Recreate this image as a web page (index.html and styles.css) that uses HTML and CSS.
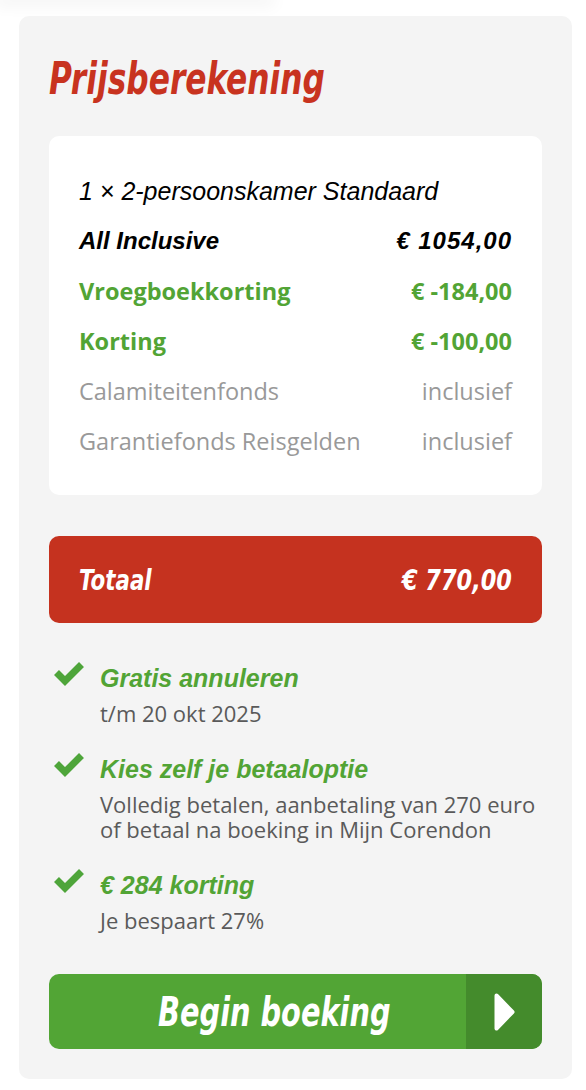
FILE: index.html
```html
<!DOCTYPE html>
<html lang="nl">
<head>
  <meta charset="UTF-8">
  <title>Prijsberekening</title>
  <link rel="stylesheet" href="styles.css">
</head>
<body>
  <div class="shade"></div>

  <div class="panel">
    <h2 class="title"><span class="narrow">Prijsberekening</span></h2>

    <div class="card">
      <div class="row room"><span>1 × 2-persoonskamer Standaard</span></div>
      <div class="row board"><span>All Inclusive</span><span class="amount">€ 1054,00</span></div>
      <div class="row discount"><span>Vroegboekkorting</span><span>€ -184,00</span></div>
      <div class="row discount"><span>Korting</span><span>€ -100,00</span></div>
      <div class="row extra"><span>Calamiteitenfonds</span><span>inclusief</span></div>
      <div class="row extra"><span>Garantiefonds Reisgelden</span><span>inclusief</span></div>
    </div>

    <div class="total">
      <span class="narrow total-label">Totaal</span>
      <span class="narrow total-price">€ 770,00</span>
    </div>

    <ul class="usps">
      <li>
        <svg class="check" width="32" height="25" viewBox="0 0 32 25"><polyline points="3.5,10.5 12,19 28.5,2.5" /></svg>
        <div>
          <div class="usp-title">Gratis annuleren</div>
          <div class="usp-text">t/m 20 okt 2025</div>
        </div>
      </li>
      <li>
        <svg class="check" width="32" height="25" viewBox="0 0 32 25"><polyline points="3.5,10.5 12,19 28.5,2.5" /></svg>
        <div>
          <div class="usp-title">Kies zelf je betaaloptie</div>
          <div class="usp-text">Volledig betalen, aanbetaling van 270 euro of betaal na boeking in Mijn Corendon</div>
        </div>
      </li>
      <li>
        <svg class="check" width="32" height="25" viewBox="0 0 32 25"><polyline points="3.5,10.5 12,19 28.5,2.5" /></svg>
        <div>
          <div class="usp-title">€ 284 korting</div>
          <div class="usp-text">Je bespaart 27%</div>
        </div>
      </li>
    </ul>

    <button class="book">
      <span class="book-label"><span class="narrow">Begin boeking</span></span>
      <span class="book-arrow">
        <svg width="21" height="38" viewBox="0 0 21 38"><polygon points="2.5,2.5 18.5,19 2.5,35.5" /></svg>
      </span>
    </button>
  </div>
</body>
</html>
```

FILE: styles.css
```css
body {
  margin: 0;
  background: #fff;
  font-family: "Open Sans", sans-serif;
}
.shade {
  width: 270px;
  height: 0;
  box-shadow: 0 0 16px 5px rgba(0, 0, 0, 0.06);
}
.panel {
  width: 493px;
  margin: 16px 0 0 19px;
  padding: 35px 30px 30px;
  background: #f4f4f4;
  border-radius: 10px;
}
/* condensed italic display type */
.narrow {
  display: inline-block;
  font-family: "DejaVu Sans Condensed", sans-serif;
  font-style: italic;
  font-weight: bold;
  transform-origin: left center;
}
.title {
  margin: 0 0 31px;
  font-size: 44px;
  line-height: 52px;
  color: #c8331f;
}
.title .narrow {
  transform: scaleX(0.79);
}
.card {
  background: #fff;
  border-radius: 10px;
  padding: 30px 30px 29px;
}
.row {
  display: flex;
  justify-content: space-between;
  height: 50px;
  line-height: 50px;
  white-space: nowrap;
}
.room, .board {
  font-family: "Liberation Sans", sans-serif;
  font-style: italic;
  color: #000;
}
.room {
  font-size: 25px;
}
.board {
  font-weight: bold;
  font-size: 24px;
}
.amount {
  letter-spacing: 1px;
}
.discount {
  font-weight: bold;
  font-size: 23.5px;
  color: #52a435;
}
.extra {
  font-size: 23.5px;
  color: #999;
}
.total {
  display: flex;
  justify-content: space-between;
  align-items: center;
  height: 87px;
  margin-top: 41px;
  padding: 0 30px;
  background: #c5321f;
  border-radius: 10px;
  color: #fff;
  font-size: 29px;
}
.total-label {
  transform: scaleX(0.82);
}
.total-price {
  transform: scaleX(0.86);
  transform-origin: right center;
}
.usps {
  list-style: none;
  margin: 40px 0 0;
  padding: 0 0 0 4px;
}
.usps li {
  display: flex;
  gap: 15px;
  margin-bottom: 28px;
}
.usps li:last-child {
  margin-bottom: 0;
}
.check {
  flex: none;
  margin-top: -1px;
}
.check polyline {
  fill: none;
  stroke: #4ea53a;
  stroke-width: 7;
}
.usp-title {
  font-family: "Liberation Sans", sans-serif;
  font-style: italic;
  font-weight: bold;
  font-size: 25px;
  line-height: 30px;
  color: #52a435;
  margin-bottom: 8px;
}
.usp-text {
  font-size: 22px;
  line-height: 25px;
  color: #5a5a5a;
}
.book {
  display: flex;
  width: 100%;
  height: 75px;
  margin-top: 41px;
  padding: 0;
  border: 0;
  border-radius: 10px;
  overflow: hidden;
  background: #52a535;
  color: #fff;
  cursor: pointer;
}
.book-label {
  flex: 1;
  align-self: center;
  padding-left: 34px;
  text-align: center;
  font-size: 40px;
}
.book-label .narrow {
  transform: scaleX(0.8);
  transform-origin: center;
}
.book-arrow {
  display: flex;
  align-items: center;
  justify-content: center;
  width: 76px;
  background: #448b2c;
}
.book-arrow polygon {
  fill: #fff;
  stroke: #fff;
  stroke-width: 4;
  stroke-linejoin: round;
}
```
